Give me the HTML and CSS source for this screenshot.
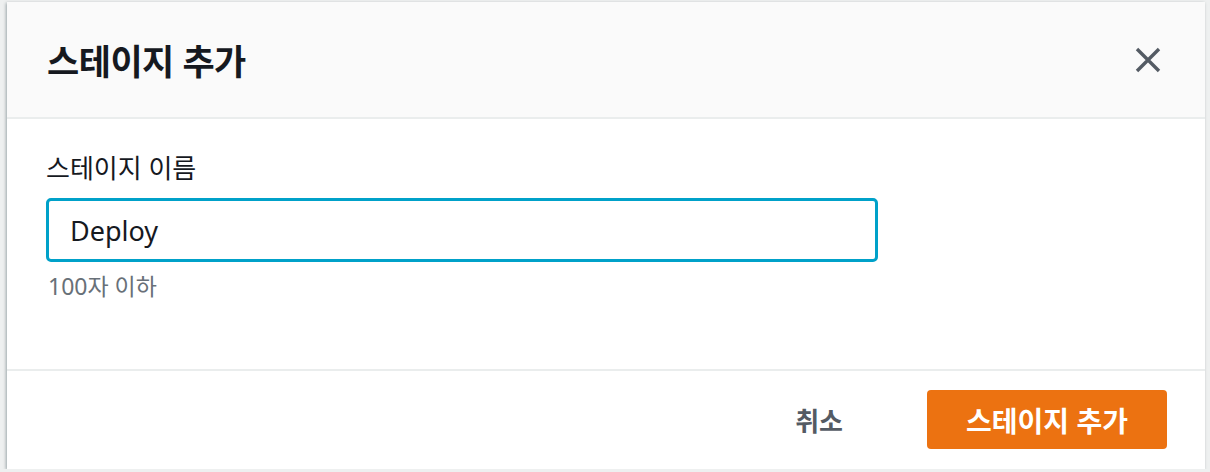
FILE: index.html
```html
<!DOCTYPE html>
<html lang="ko">
<head>
<meta charset="utf-8">
<title>스테이지 추가</title>
<link rel="stylesheet" href="styles.css">
</head>
<body>

<div class="modal">
 <div class="modal-header">
  <h2>스테이지 추가</h2>
  <button class="close-btn" aria-label="닫기">
   <svg width="26" height="26" viewBox="0 0 26 26">
    <path d="M2 2 L24 24 M24 2 L2 24" stroke="#545b64" stroke-width="3.4" fill="none"/>
   </svg>
  </button>
 </div>

 <div class="modal-body">
  <label class="field-label" for="stageName">스테이지 이름</label>
  <input class="field-input" id="stageName" type="text" value="Deploy">
  <p class="field-hint">100자 이하</p>
 </div>

 <div class="modal-footer">
  <button class="btn-link">취소</button>
  <button class="btn-primary">스테이지 추가</button>
 </div>
</div>

</body>
</html>
```

FILE: styles.css
```css
body {
 margin: 0;
 background-color: #eef0f0;
 font-family: "Noto Sans", "Noto Sans CJK KR", sans-serif;
 color: #16191f;
}

.modal {
 margin: 2px 5px 0 7px;
 height: 467px;
 background-color: #fff;
 display: flex;
 flex-direction: column;
 box-shadow: -1px 1px 3px rgba(0, 28, 36, 0.35);
}

.modal-header {
 box-sizing: border-box;
 height: 117px;
 padding: 0 40px;
 background-color: #fafafa;
 border-bottom: 2px solid #eaeded;
 display: flex;
 align-items: center;
 justify-content: space-between;
}
.modal-header h2 {
 margin: 0;
 font-size: 35px;
 font-weight: 700;
 letter-spacing: -0.5px;
}
.close-btn {
 border: 0;
 background: none;
 padding: 0;
 margin-right: 4px;
 display: flex;
}

.modal-body {
 flex: 1;
 padding: 31px 39px 0;
 display: flex;
 flex-direction: column;
 align-items: flex-start;
}
.field-label {
 font-size: 26px;
 line-height: 36px;
 margin-bottom: 12px;
}
.field-input {
 box-sizing: border-box;
 width: 832px;
 height: 64px;
 border: 3px solid #00a1c9;
 border-radius: 5px;
 padding: 0 21px;
 font-family: inherit;
 font-size: 27px;
 color: #16191f;
 outline: none;
}
.field-hint {
 margin: 8px 0 0 2px;
 font-size: 23px;
 line-height: 32px;
 color: #687078;
}

.modal-footer {
 height: 100px;
 box-sizing: border-box;
 border-top: 2px solid #eaeded;
 padding: 19px 38px 20px;
 display: flex;
 justify-content: flex-end;
 align-items: flex-start;
 gap: 44px;
}
.btn-link, .btn-primary {
 height: 59px;
 border: 0;
 border-radius: 4px;
 font-family: inherit;
 font-weight: 700;
}
.btn-link {
 background: none;
 color: #545b64;
 font-size: 26px;
 padding: 0 40px;
}
.btn-primary {
 width: 240px;
 background-color: #ec7211;
 color: #fff;
 font-size: 28px;
}
```
